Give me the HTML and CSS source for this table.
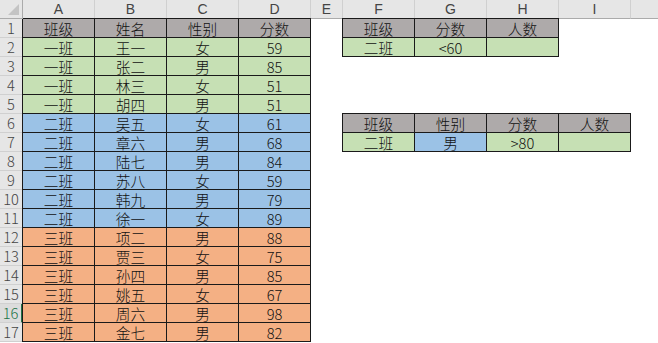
FILE: index.html
```html
<!DOCTYPE html>
<html lang="zh-CN">
<head>
<meta charset="utf-8">
<title>Sheet</title>
<link rel="stylesheet" href="styles.css">
</head>
<body>
<div class="sheet">
  <div class="corner"><span class="tri"></span></div>
  <div class="ch">A</div><div class="ch">B</div><div class="ch">C</div><div class="ch">D</div><div class="ch">E</div><div class="ch">F</div><div class="ch">G</div><div class="ch">H</div><div class="ch">I</div><div class="ch last"></div>

  <div class="rh">1</div>
  <div class="t hd L T">班级</div><div class="t hd T">姓名</div><div class="t hd T">性别</div><div class="t hd T">分数</div>
  <div class="c"></div>
  <div class="t hd L T">班级</div><div class="t hd T">分数</div><div class="t hd T">人数</div>
  <div class="c"></div><div class="c"></div>

  <div class="rh">2</div>
  <div class="t g L">一班</div><div class="t g">王一</div><div class="t g">女</div><div class="t g">59</div>
  <div class="c"></div>
  <div class="t g L">二班</div><div class="t g">&lt;60</div><div class="t g"></div>
  <div class="c"></div><div class="c"></div>

  <div class="rh">3</div>
  <div class="t g L">一班</div><div class="t g">张二</div><div class="t g">男</div><div class="t g">85</div>
  <div class="c"></div><div class="c"></div><div class="c"></div><div class="c"></div><div class="c"></div><div class="c"></div>

  <div class="rh">4</div>
  <div class="t g L">一班</div><div class="t g">林三</div><div class="t g">女</div><div class="t g">51</div>
  <div class="c"></div><div class="c"></div><div class="c"></div><div class="c"></div><div class="c"></div><div class="c"></div>

  <div class="rh">5</div>
  <div class="t g L">一班</div><div class="t g">胡四</div><div class="t g">男</div><div class="t g">51</div>
  <div class="c"></div><div class="c"></div><div class="c"></div><div class="c"></div><div class="c"></div><div class="c"></div>

  <div class="rh">6</div>
  <div class="t b L">二班</div><div class="t b">吴五</div><div class="t b">女</div><div class="t b">61</div>
  <div class="c"></div>
  <div class="t hd L T">班级</div><div class="t hd T">性别</div><div class="t hd T">分数</div><div class="t hd T">人数</div>
  <div class="c"></div>

  <div class="rh">7</div>
  <div class="t b L">二班</div><div class="t b">章六</div><div class="t b">男</div><div class="t b">68</div>
  <div class="c"></div>
  <div class="t g L">二班</div><div class="t b">男</div><div class="t g">&gt;80</div><div class="t g"></div>
  <div class="c"></div>

  <div class="rh">8</div>
  <div class="t b L">二班</div><div class="t b">陆七</div><div class="t b">男</div><div class="t b">84</div>
  <div class="c"></div><div class="c"></div><div class="c"></div><div class="c"></div><div class="c"></div><div class="c"></div>

  <div class="rh">9</div>
  <div class="t b L">二班</div><div class="t b">苏八</div><div class="t b">女</div><div class="t b">59</div>
  <div class="c"></div><div class="c"></div><div class="c"></div><div class="c"></div><div class="c"></div><div class="c"></div>

  <div class="rh">10</div>
  <div class="t b L">二班</div><div class="t b">韩九</div><div class="t b">男</div><div class="t b">79</div>
  <div class="c"></div><div class="c"></div><div class="c"></div><div class="c"></div><div class="c"></div><div class="c"></div>

  <div class="rh">11</div>
  <div class="t b L">二班</div><div class="t b">徐一</div><div class="t b">女</div><div class="t b">89</div>
  <div class="c"></div><div class="c"></div><div class="c"></div><div class="c"></div><div class="c"></div><div class="c"></div>

  <div class="rh">12</div>
  <div class="t o L">三班</div><div class="t o">项二</div><div class="t o">男</div><div class="t o">88</div>
  <div class="c"></div><div class="c"></div><div class="c"></div><div class="c"></div><div class="c"></div><div class="c"></div>

  <div class="rh">13</div>
  <div class="t o L">三班</div><div class="t o">贾三</div><div class="t o">女</div><div class="t o">75</div>
  <div class="c"></div><div class="c"></div><div class="c"></div><div class="c"></div><div class="c"></div><div class="c"></div>

  <div class="rh">14</div>
  <div class="t o L">三班</div><div class="t o">孙四</div><div class="t o">男</div><div class="t o">85</div>
  <div class="c"></div><div class="c"></div><div class="c"></div><div class="c"></div><div class="c"></div><div class="c"></div>

  <div class="rh">15</div>
  <div class="t o L">三班</div><div class="t o">姚五</div><div class="t o">女</div><div class="t o">67</div>
  <div class="c"></div><div class="c"></div><div class="c"></div><div class="c"></div><div class="c"></div><div class="c"></div>

  <div class="rh active">16</div>
  <div class="t o L">三班</div><div class="t o">周六</div><div class="t o">男</div><div class="t o">98</div>
  <div class="c"></div><div class="c"></div><div class="c"></div><div class="c"></div><div class="c"></div><div class="c"></div>

  <div class="rh">17</div>
  <div class="t o L">三班</div><div class="t o">金七</div><div class="t o">男</div><div class="t o">82</div>
  <div class="c"></div><div class="c"></div><div class="c"></div><div class="c"></div><div class="c"></div><div class="c"></div>
</div>
</body>
</html>
```
FILE: styles.css
```css
html, body {
  margin: 0;
  padding: 0;
  background: #fff;
}

.sheet {
  display: grid;
  grid-template-columns: 23px 72px 72px 72px 72px 32px 72px 72px 72px 72px 1fr;
  grid-auto-rows: 19px;
  width: 658px;
  font-family: "Noto Sans CJK SC", "Noto Sans", sans-serif;
  font-size: 14.67px;
  font-weight: 300;
  color: #111;
}

.sheet > div {
  box-sizing: border-box;
  display: flex;
  align-items: center;
  justify-content: center;
  line-height: 18px;
  white-space: nowrap;
}

.corner {
  background: #e6e6e6;
  border-right: 1px solid #ababab;
  border-bottom: 1px solid #ababab;
  position: relative;
}

.tri {
  position: absolute;
  right: 3px;
  bottom: 3px;
  width: 0;
  height: 0;
  border-left: 11px solid transparent;
  border-bottom: 11px solid #c4c4c4;
}

.ch {
  background: #e6e6e6;
  color: #444;
  font-family: "Liberation Sans", "Noto Sans", sans-serif;
  font-size: 14px;
  font-weight: 400;
  border-right: 1px solid #d0d0d0;
  border-bottom: 1px solid #ababab;
}

.ch.last {
  border-right: none;
}

.rh {
  background: #e6e6e6;
  color: #444;
  border-right: 1px solid #ababab;
  border-bottom: 1px solid #d0d0d0;
}

.rh.active {
  color: #217346;
  background: #dcdcdc;
  border-right: 2px solid #217346;
}

.c {
  background: #fff;
}

.t {
  border-right: 1px solid #1a1a1a;
  border-bottom: 1px solid #1a1a1a;
  padding-top: 1px;
}

.t.L {
  border-left: 1px solid #1a1a1a;
  margin-left: -1px;
}

.t.T {
  border-top: 1px solid #1a1a1a;
  margin-top: -1px;
}

.hd { background: #aeaaaa; }
.g { background: #c6e0b4; }
.b { background: #9bc2e6; }
.o { background: #f4b084; }
```
